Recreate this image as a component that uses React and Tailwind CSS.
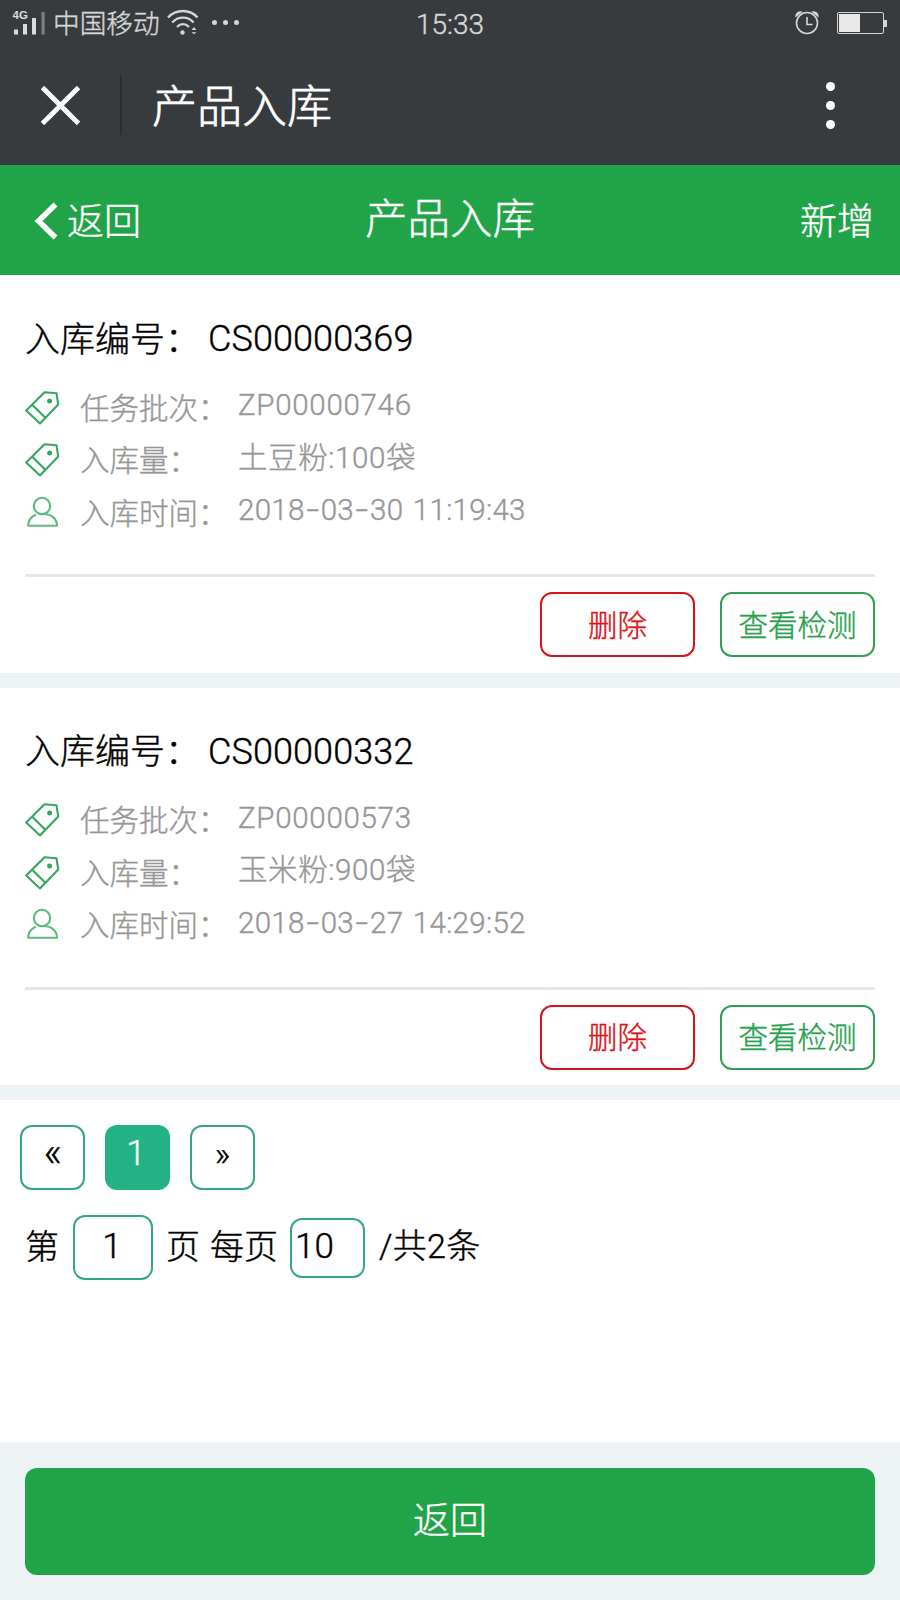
import { useState } from 'react';

const records = [
  { code: 'CS00000369', batch: 'ZP00000746', amount: '土豆粉:100袋', time: '2018-03-30 11:19:43' },
  { code: 'CS00000332', batch: 'ZP00000573', amount: '玉米粉:900袋', time: '2018-03-27 14:29:52' },
];

const TagIcon = () => (
  <svg className="w-[35px] h-[35px]" viewBox="0 0 35 35" fill="none" stroke="#35a85c" strokeWidth="2.1" strokeLinejoin="round">
    <path d="M1.200 20.500 19.500 2.200 31.500 3.200 33.200 14.500 15 33.500Z" />
    <path d="M7.200 14.800 20.600 28" />
    <circle cx="24.600" cy="11" r="2.500" fill="#35a85c" stroke="none" />
  </svg>
);

const UserIcon = () => (
  <svg className="w-[35px] h-[35px]" viewBox="0 0 35 35" fill="none" stroke="#5cba7d" strokeWidth="2.1" strokeLinejoin="round" strokeLinecap="round">
    <circle cx="17" cy="11" r="8.2" />
    <path d="M10.200 20C6 22 3.200 25.600 3.200 30.800H32C32 24 26.500 19 19 19" />
  </svg>
);

const StatusBar = () => (
  <div className="h-[46px] flex items-center justify-between pl-3 pr-[13px] text-[#d3d6d8]">
    <div className="flex items-center w-[404px]">
      <svg className="w-[35px] h-[28px]" viewBox="0 0 35 28" fill="#d9dcdd">
        <text x="0.500" y="9.500" fontSize="11.500" fontWeight="700" fontFamily="Liberation Sans, sans-serif" strokeWidth="0">4G</text>
        <rect x="2" y="20.500" width="4" height="5" />
        <rect x="11" y="15" width="4" height="10.500" />
        <rect x="20" y="9" width="4" height="16.500" />
        <rect x="29.500" y="3" width="3.200" height="22.500" fill="#7b7f82" />
      </svg>
      <span className="ml-[6px] text-[26.700px] leading-none pt-[2px]">中国移动</span>
      <svg className="ml-[6px] w-[34px] h-[28px]" viewBox="0 0 34 28" fill="none" stroke="#d3d6d8" strokeWidth="2.300">
        <path d="M2 8.500C10-.2 24-.2 31.500 8.500" />
        <path d="M6.300 13.500C12 7 22 7 27.500 13.500" />
        <path d="M11 18C14.500 14.200 19.500 14.200 23 18" />
        <circle cx="16.500" cy="23.500" r="2.200" fill="#d3d6d8" stroke="none" />
        <path d="M25.500 21 28 18l2.500 3zM25.500 23.300l2.500 2 2.500-2z" fill="#d3d6d8" stroke="none" />
      </svg>
      <div className="ml-[12px] flex gap-[6px]">
        <span className="size-[5px] rounded-full bg-current" />
        <span className="size-[5px] rounded-full bg-current" />
        <span className="size-[5px] rounded-full bg-current" />
      </div>
    </div>
    <span className="flex-1 text-[28px] leading-none pt-[3px]">15:33</span>
    <svg className="w-[26px] h-[26px]" viewBox="0 0 26 26" fill="none" stroke="#d3d6d8" strokeWidth="1.600">
      <circle cx="13" cy="13" r="10.500" />
      <path d="M13 7v7.500h5.500" />
      <path d="M1.500 7.500C.5 3.500 4.500 0 8.500 1.700ZM24.500 7.500C25.500 3.500 21.500 0 17.500 1.700Z" fill="#d3d6d8" stroke="none" />
    </svg>
    <div className="ml-[17px] flex items-center">
      <div className="w-[47px] h-[22px] border border-[#d3d6d8] rounded-[2px] p-px">
        <div className="w-[21px] h-full bg-[#e8e8e8]" />
      </div>
      <div className="w-[3px] h-[7px] bg-[#d3d6d8]" />
    </div>
  </div>
);

const TitleBar = () => (
  <div className="h-[119px] flex items-center pb-px">
    <svg className="ml-[41px] w-[39px] h-[39px]" viewBox="0 0 39 39" stroke="#fff" strokeWidth="4.800">
      <path d="M1.500 1.500l36 36M37.500 1.500l-36 36" />
    </svg>
    <div className="ml-10 w-[2px] h-[60px] bg-[#2b2d30]" />
    <h1 className="ml-[30px] flex-1 text-[45px] leading-none text-white pt-[4px] [-webkit-text-stroke:0.700px]">产品入库</h1>
    <div className="mr-[65px] flex flex-col gap-[10px]">
      <span className="size-[9px] rounded-full bg-white" />
      <span className="size-[9px] rounded-full bg-white" />
      <span className="size-[9px] rounded-full bg-white" />
    </div>
  </div>
);

const NavBar = () => (
  <header className="h-[110px] grid grid-cols-3 items-center bg-[#20a447] text-white pl-[34px] pr-[26px]">
    <button className="flex items-center text-[37px] leading-none pt-[2px]">
      <svg className="w-[24px] h-[38px]" viewBox="0 0 24 38" fill="none" stroke="#fff" strokeWidth="5.500">
        <path d="M21.500 2.500 4.500 19l17 16.500" />
      </svg>
      <span className="ml-[9px] pt-[2px]">返回</span>
    </button>
    <h2 className="text-center text-[42.500px] leading-none pt-px -ml-2">产品入库</h2>
    <button className="text-right text-[37px] leading-none pt-[4px]">新增</button>
  </header>
);

// hyphens are drawn wider than the font's own
const TimeText = ({ value }) => (
  <span className="tracking-[0.300px] [word-spacing:2px]">
    {value.split('-').map((part, i) => (
      <span key={i}>
        {i > 0 && <span className="inline-block w-[16px] text-center scale-x-150">-</span>}
        {part}
      </span>
    ))}
  </span>
);

const InfoRow = ({ icon, label, children }) => (
  <div className="h-[52.500px] flex items-center text-[29.500px] leading-none text-[#979797]">
    {icon}
    <span className="ml-[20px] w-[158px] pt-[4px]">{label}</span>
    <span className="pb-[3px]">{children}</span>
  </div>
);

const RecordCard = ({ record }) => (
  <section className="h-[412.500px] bg-white border-b-[15px] border-[#edf2f5] px-[25px] pt-[39px]">
    <div className="h-[48px] flex items-center text-[35px] leading-none text-black">
      <span className="w-[183px] pt-[4px]">入库编号：</span>
      <span className="text-[36px] pt-[2px] tracking-[0.100px]">{record.code}</span>
    </div>
    <div className="pt-[19px]">
      <InfoRow icon={<TagIcon />} label="任务批次：">
        <span className="tracking-[0.700px]">{record.batch}</span>
      </InfoRow>
      <InfoRow icon={<TagIcon />} label="入库量：">
        <span className="tracking-[0.600px]">{record.amount}</span>
      </InfoRow>
      <InfoRow icon={<UserIcon />} label="入库时间：">
        <TimeText value={record.time} />
      </InfoRow>
    </div>
    <div className="mt-[35.500px] border-t-[3px] border-[#e4e6e7] pt-[15px] flex justify-end gap-[25px] text-[29.500px] leading-none">
      <button className="w-[155px] h-[65px] pt-[4px] rounded-xl border-[2.500px] border-[#d4161b] text-[#dc1015]">删除</button>
      <button className="w-[155px] h-[65px] pt-[4px] rounded-xl border-[2.500px] border-[#2f9f54] text-[#26a14b]">查看检测</button>
    </div>
  </section>
);

const Pagination = ({ page, onChange }) => (
  <div className="h-[342px] bg-white pt-[25px] text-black">
    <div className="flex gap-5 pl-5 text-[34px] leading-none">
      <button onClick={() => onChange(1)} className="size-[65px] pb-[10px] rounded-xl border-2 border-[#36a681] text-[40px]">«</button>
      <button className="size-[65px] rounded-xl bg-[#22b286] text-white text-[35px] pb-[9px] pr-[3px]">{page}</button>
      <button onClick={() => onChange(1)} className="size-[65px] pb-[8px] rounded-xl border-2 border-[#36a681]">»</button>
    </div>
    <div className="mt-[25px] flex items-center pl-[25px] text-[34px] leading-none">
      <span className="pb-[2px]">第</span>
      <span className="ml-[14px] w-[80px] h-[65px] flex items-center justify-center rounded-xl border-2 border-[#36a681] text-[35px] pb-[3px] pr-[2px]">{page}</span>
      <span className="ml-[13px] pb-[2px]">页</span>
      <span className="ml-[10px] pb-[2px]">每页</span>
      <span className="ml-[12px] w-[75px] h-[60px] flex items-center pl-[3px] rounded-xl border-2 border-[#36a681] text-[35px] pb-[3px]">10</span>
      <span className="ml-[14px] pb-[3px] tracking-[0.300px]">/共2条</span>
    </div>
  </div>
);

const App = () => {
  const [page, setPage] = useState(1);

  return (
    <div className="w-[900px] h-[1600px] overflow-hidden bg-[#edf2f5] font-light [-webkit-text-stroke:0.400px] font-[Roboto,'Noto_Sans_CJK_SC',sans-serif]">
      <div className="bg-[#383b3e]">
        <StatusBar />
        <TitleBar />
      </div>
      <NavBar />
      {records.map((record) => (
        <RecordCard key={record.code} record={record} />
      ))}
      <Pagination page={page} onChange={setPage} />
      <div className="px-[25px] pt-[25.500px]">
        <button className="w-full h-[107.500px] rounded-xl bg-[#20a447] text-white text-[37px] leading-none pt-px">返回</button>
      </div>
    </div>
  );
};

export default App;
